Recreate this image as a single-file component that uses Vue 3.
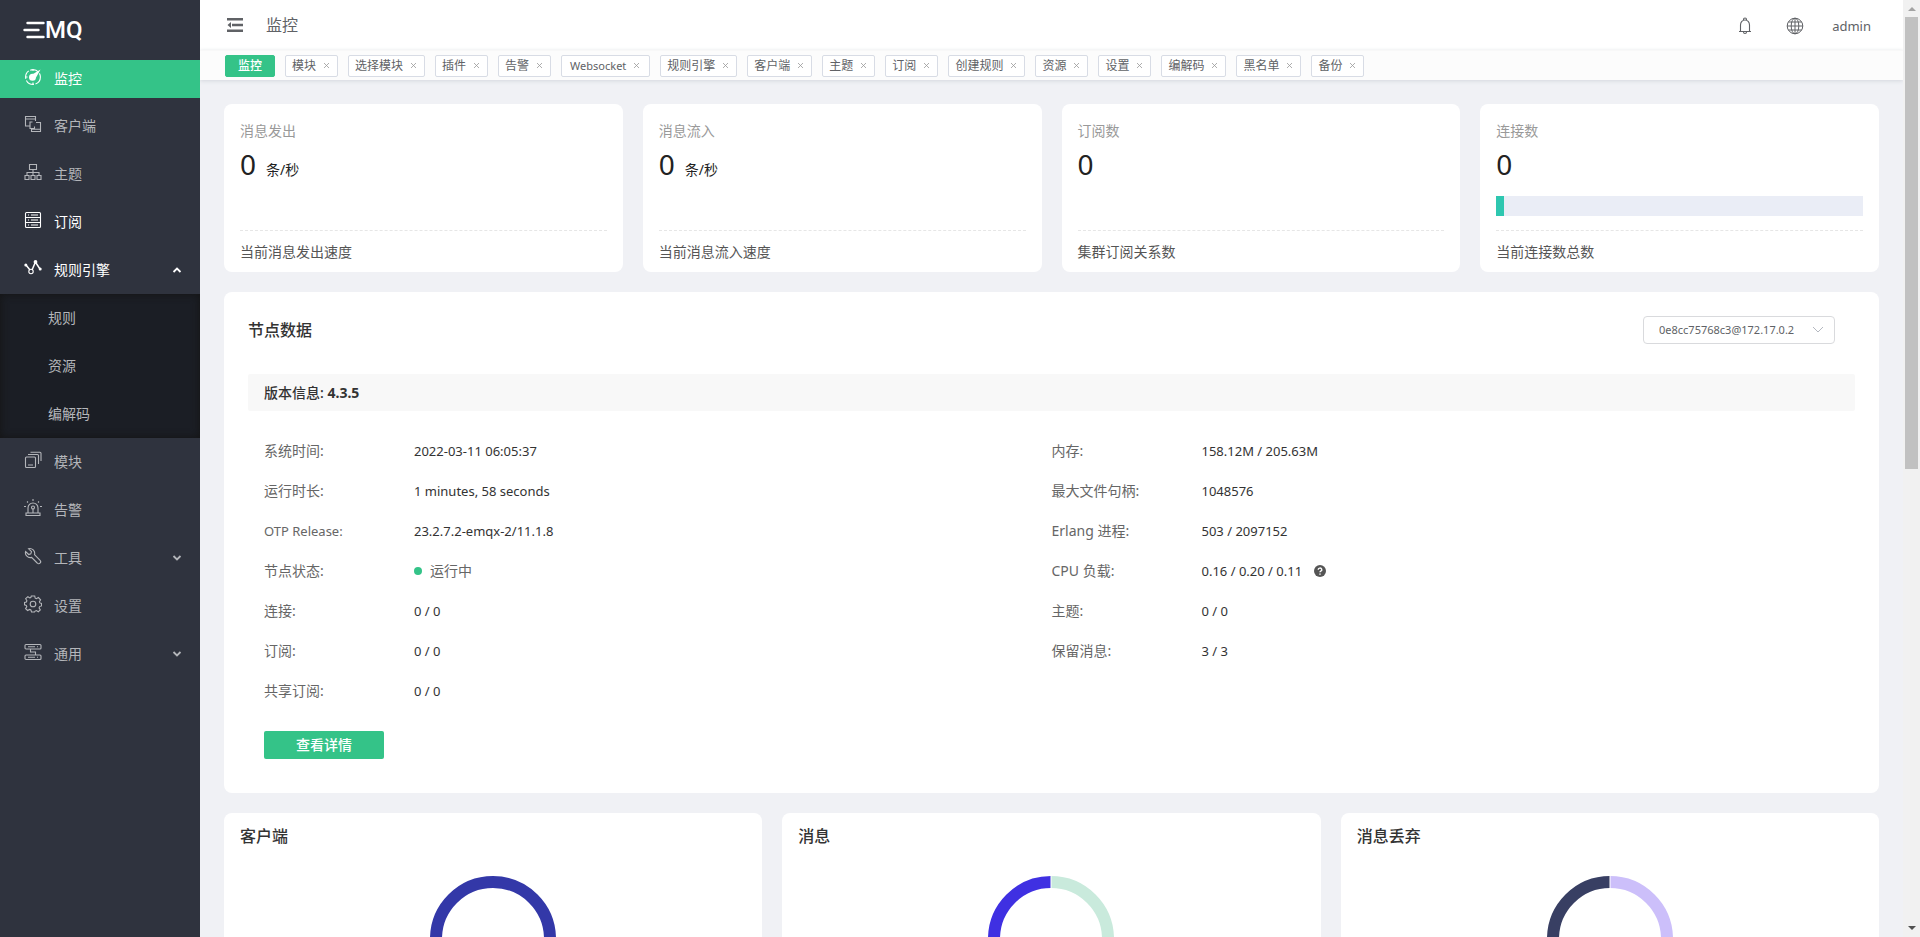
<script setup>
import { ref } from 'vue'

const icons = {
  monitor: '<circle cx="9" cy="9" r="7.4" stroke-dasharray="9 1.6"/><circle cx="8.500" cy="9.200" r="3.500" fill="currentColor" stroke="none"/><path d="M9 6 16.500 1.500 12 9.500Z" fill="currentColor" stroke="none"/><path d="M1.500 9h2M9 16.500v-2M9 1.500v1.500"/>',
  clients: '<path d="M5.500 11h-4v-9.500h10V6M1.500 4h10M8.500 7H6v6.500h4.500v-2M12 7.500h4.500v9h-9V14M7.500 14.200h9"/>',
  topics: '<path d="M5.500 1.500h7v5h-7zM9 6.500v3M3 12V9.500h12V12M9 9.500V12M1 12.500h4v4H1zM7 12.500h4v4H7zM13 12.500h4v4h-4z"/>',
  subs: '<rect x="1.500" y="1.500" width="15" height="15" rx="1"/><path d="M1.500 6.500h15M1.500 11.500h15M7 4h7M7 9h7M7 14h7M4 4h1M4 9h1M4 14h1"/>',
  rules: '<path d="M2 6l4 5M8 11l3-7M12 4l4 6" stroke-width="1.500"/><circle cx="1.800" cy="6" r="1.500" fill="currentColor" stroke="none"/><circle cx="7" cy="12.500" r="2.200"/><circle cx="11.500" cy="3" r="1.900" fill="currentColor" stroke="none"/><circle cx="16.200" cy="10" r="1.500" fill="currentColor" stroke="none"/>',
  modules: '<rect x="1.500" y="6" width="10" height="10.500" rx="1"/><path d="M4 14h5M4 3.500h9.500a1 1 0 0 1 1 1V13M6.500 1.200H16a1 1 0 0 1 1 1V10"/>',
  alarms: '<path d="M4 13.500V9a5 5 0 0 1 10 0v4.500M2 14h14v2.500H2zM9 9.500V13.500M9 0v2M3 2.500l1 1M15 2.500l-1 1M0 7.500h2M16 7.500h2"/><circle cx="9" cy="8.500" r="1.500"/>',
  tools: '<path d="M4.500 1.700 7.500 4.700 6.800 6.800 4.700 7.500 1.600 4.600C.6 8 4 11.500 7.600 10.400L13.200 16a1.900 1.900 0 0 0 2.900-2.700L10.500 7.700C11.600 4 8 .6 4.500 1.700Z"/>',
  settings: '<path d="M7.300 1h3.400l.5 2.200 1.200.5 2-1.200 2.200 2.300-1.200 1.900.5 1.200 1.600.5v2.500l-1.900.7-.5 1.300 1.200 2-2 1.800-1.900-1.100-1.300.5L10.500 17h-3l-.6-2.100-1.300-.5-2 1.100-2-1.900 1.200-2-.5-1.200-1.800-.6V7.400l1.900-.4.5-1.300-1.200-2 2.200-2 1.900 1.200 1-.4Z"/><circle cx="9" cy="9" r="2.800"/>',
  general: '<rect x="1" y="1.500" width="16" height="4.500" rx="1"/><rect x="1" y="12" width="16" height="4.500" rx="1"/><path d="M4 3.800h7M13 3.800h1M4 14.200h7M13 14.200h1M6.500 6v3h5v3"/>',
}

const menu = [
  { label: '监控', icon: 'monitor', state: 'active' },
  { label: '客户端', icon: 'clients' },
  { label: '主题', icon: 'topics' },
  { label: '订阅', icon: 'subs', state: 'bright' },
  { label: '规则引擎', icon: 'rules', state: 'bright', arrow: 'up', children: ['规则', '资源', '编解码'] },
  { label: '模块', icon: 'modules' },
  { label: '告警', icon: 'alarms' },
  { label: '工具', icon: 'tools', arrow: 'down' },
  { label: '设置', icon: 'settings' },
  { label: '通用', icon: 'general', arrow: 'down' },
]

const tabs = ['模块', '选择模块', '插件', '告警', 'Websocket', '规则引擎', '客户端', '主题', '订阅', '创建规则', '资源', '设置', '编解码', '黑名单', '备份']

const stats = [
  { title: '消息发出', value: 0, unit: '条/秒', note: '当前消息发出速度' },
  { title: '消息流入', value: 0, unit: '条/秒', note: '当前消息流入速度' },
  { title: '订阅数', value: 0, note: '集群订阅关系数' },
  { title: '连接数', value: 0, note: '当前连接数总数', percent: 2 },
]

const columns = [
  [
    ['系统时间:', '2022-03-11 06:05:37'],
    ['运行时长:', '1 minutes, 58 seconds'],
    ['OTP Release:', '23.2.7.2-emqx-2/11.1.8'],
    ['节点状态:', '运行中', 'status'],
    ['连接:', '0 / 0'],
    ['订阅:', '0 / 0'],
    ['共享订阅:', '0 / 0'],
  ],
  [
    ['内存:', '158.12M / 205.63M'],
    ['最大文件句柄:', '1048576'],
    ['Erlang 进程:', '503 / 2097152'],
    ['CPU 负载:', '0.16 / 0.20 / 0.11', 'help'],
    ['主题:', '0 / 0'],
    ['保留消息:', '3 / 3'],
  ],
]

const charts = [
  { title: '客户端', left: '#3338a8', right: '#3338a8' },
  { title: '消息', left: '#3f30e2', right: '#c9eadc', split: true },
  { title: '消息丢弃', left: '#383f63', right: '#ccbffa', split: true },
]

const isLatin = (text) => /^[\x20-\x7e]+$/.test(text)
const node = ref('0e8cc75768c3@172.17.0.2')
</script>

<template>
  <div class="layout">
    <aside class="sidebar">
      <a class="logo" href="#" aria-label="EMQ">
        <svg width="22" height="18" viewBox="0 0 22 18" fill="none" stroke="currentColor" stroke-width="2.400" stroke-linecap="round" aria-hidden="true">
          <path d="M4.500 2h16M1.500 9h14M4.500 16h16" />
        </svg>
        <span>MQ</span>
      </a>
      <nav>
        <template v-for="item in menu" :key="item.label">
          <a href="#" class="item" :class="item.state">
            <svg class="icon" width="18" height="18" viewBox="0 0 18 18" fill="none" stroke="currentColor" stroke-width="1.100" aria-hidden="true" v-html="icons[item.icon]"></svg>
            <span>{{ item.label }}</span>
            <svg v-if="item.arrow" class="arrow" width="10" height="10" viewBox="0 0 10 10" fill="none" stroke="currentColor" stroke-width="1.800" aria-hidden="true">
              <path :d="item.arrow === 'up' ? 'M1.500 7 5 3.500 8.500 7' : 'M1.500 3 5 6.500 8.500 3'" />
            </svg>
          </a>
          <div v-if="item.children" class="submenu">
            <a v-for="child in item.children" :key="child" href="#">{{ child }}</a>
          </div>
        </template>
      </nav>
    </aside>

    <main class="main">
      <header class="topbar">
        <button class="plain" type="button" aria-label="折叠菜单">
          <svg width="16" height="14" viewBox="0 0 16 14" fill="currentColor" aria-hidden="true">
            <path d="M0 0h16v2.500H0zM5 5.800h11v2.500H5zM0 11.500h16V14H0zM4 4v6L.5 7z" />
          </svg>
        </button>
        <h1>监控</h1>
        <div class="actions">
          <button class="plain" type="button" aria-label="通知">
            <svg width="14" height="18" viewBox="0 0 14 18" fill="none" stroke="currentColor" stroke-width="1.100" aria-hidden="true">
              <path d="M1 14.500h12M2.500 14.500V8a4.500 5 0 0 1 9 0v6.500M5.500 3.200V2.500a1.500 1.500 0 0 1 3 0v.7M5.500 15a1.500 1.500 0 0 0 3 0" />
            </svg>
          </button>
          <button class="plain" type="button" aria-label="语言">
            <svg width="18" height="18" viewBox="0 0 18 18" fill="none" stroke="currentColor" aria-hidden="true">
              <circle cx="9" cy="9" r="7.800" />
              <ellipse cx="9" cy="9" rx="3.800" ry="7.800" />
              <path d="M9 1v16M1 9h16M2.500 5h13M2.500 13h13" />
            </svg>
          </button>
          <a href="#" class="user">admin</a>
        </div>
      </header>

      <div class="tabs">
        <a href="#" class="tab current">监控</a>
        <a v-for="tab in tabs" :key="tab" href="#" class="tab" :class="{ latin: isLatin(tab) }">
          <span>{{ tab }}</span>
          <svg width="5" height="5" viewBox="0 0 5 5" stroke="currentColor" stroke-width="0.800" aria-hidden="true"><path d="M0 0l5 5M5 0L0 5" /></svg>
        </a>
      </div>

      <div class="content">
        <section class="stats">
          <article v-for="s in stats" :key="s.title" class="card stat">
            <h2>{{ s.title }}</h2>
            <p class="figure"><strong>{{ s.value }}</strong><span v-if="s.unit">{{ s.unit }}</span></p>
            <div class="graph">
              <div v-if="s.percent" class="bar"><div class="fill" :style="{ width: s.percent + '%' }"></div></div>
            </div>
            <p class="note">{{ s.note }}</p>
          </article>
        </section>

        <section class="card node">
          <div class="node-head">
            <h2>节点数据</h2>
            <div class="picker">
              <select v-model="node" aria-label="节点">
                <option>0e8cc75768c3@172.17.0.2</option>
              </select>
              <svg width="12" height="8" viewBox="0 0 12 8" fill="none" stroke="currentColor" aria-hidden="true"><path d="M1 1l5 5 5-5" /></svg>
            </div>
          </div>
          <div class="version">版本信息: <span>4.3.5</span></div>
          <div class="details">
            <dl v-for="(rows, i) in columns" :key="i">
              <div v-for="[label, value, kind] in rows" :key="label" class="row">
                <dt :class="{ latin: isLatin(label) }">{{ label }}</dt>
                <dd :class="{ latin: isLatin(value), status: kind === 'status' }">
                  <i v-if="kind === 'status'" class="dot"></i>{{ value }}
                  <svg v-if="kind === 'help'" width="12" height="12" viewBox="0 0 12 12" aria-hidden="true">
                    <circle cx="6" cy="6" r="6" fill="#555" />
                    <path d="M4.200 4.700a1.800 1.600 0 1 1 2.600 1.400Q6 6.500 6 7.300M6 8.400v1.300" fill="none" stroke="#fff" stroke-width="1.400" />
                  </svg>
                </dd>
              </div>
            </dl>
          </div>
          <button class="primary" type="button">查看详情</button>
        </section>

        <section class="charts">
          <article v-for="c in charts" :key="c.title" class="card chart">
            <h2>{{ c.title }}</h2>
            <svg width="126" height="126" viewBox="0 0 126 126" fill="none" stroke-width="12" aria-hidden="true">
              <path d="M63 6a57 57 0 0 0 0 114" :stroke="c.left" />
              <path d="M63 6a57 57 0 0 1 0 114" :stroke="c.right" />
              <path v-if="c.split" d="M63 0v126" stroke="#fff" stroke-width="1" />
            </svg>
          </article>
        </section>
      </div>
    </main>

    <div class="scrollbar" aria-hidden="true">
      <svg width="8" height="4" viewBox="0 0 8 4" fill="#a3a3a3"><path d="M4 0l4 4H0z" /></svg>
      <div class="track"><div class="thumb"></div></div>
      <svg width="8" height="4" viewBox="0 0 8 4" fill="#505050"><path d="M4 4l4-4H0z" /></svg>
    </div>
  </div>
</template>

<style>
body {
  background: #f0f1f5;
}
</style>

<style scoped>
.layout {
  display: grid;
  grid-template-columns: 200px minmax(0, 1fr) 17px;
  height: 100vh;
  overflow: hidden;
  font: 14px/20px "Noto Sans", "Noto Sans CJK SC", sans-serif;
  color: #333;
}
.layout * {
  box-sizing: border-box;
}
a {
  color: inherit;
  text-decoration: none;
}
h1, h2, p, dl, dd {
  margin: 0;
}
button {
  font: inherit;
  cursor: pointer;
}
svg {
  flex: none;
}

.sidebar {
  background: #2f333e;
  color: #b4b6ba;
  overflow: hidden;
}
.logo {
  display: flex;
  align-items: center;
  height: 60px;
  padding-left: 23px;
  color: #fff;
  font: 500 24px/60px Roboto, sans-serif;
}
.item {
  display: flex;
  align-items: center;
  height: 48px;
  padding: 0 18px 0 24px;
}
.item .icon {
  margin: 0 12px 4px 0;
}
.item .arrow {
  margin-left: auto;
}
.item.active {
  height: 38px;
  margin-bottom: 4px;
  background: #34c388;
  color: #fff;
}
.item.bright {
  color: #fff;
}
.submenu {
  background: #1b1e25;
  box-shadow: inset 0 0 8px #141414;
}
.submenu a {
  display: block;
  padding-left: 48px;
  line-height: 48px;
}

.main {
  overflow-y: auto;
  scrollbar-width: none;
}
.topbar {
  display: flex;
  align-items: center;
  height: 50px;
  padding: 0 32px 0 27px;
  background: #fff;
  color: #606266;
}
.plain {
  display: flex;
  padding: 0;
  border: 0;
  background: none;
  color: inherit;
}
.topbar h1 {
  margin-left: 23px;
  font-size: 16px;
  font-weight: 400;
}
.actions {
  display: flex;
  align-items: center;
  gap: 34px;
  margin-left: auto;
  padding-top: 2px;
}
.user {
  margin-left: -6px;
  font-size: 13px;
}
.tabs {
  display: flex;
  align-items: center;
  gap: 10px;
  height: 30px;
  padding: 0 25px;
  background: #fcfcfc;
  border-top: 1px solid #f8f8f8;
  box-shadow: 0 1px 4px #d4d7dd;
  font-size: 12px;
  white-space: nowrap;
}
.tab {
  display: flex;
  align-items: center;
  gap: 8px;
  height: 22px;
  padding: 0 8px 0 6px;
  border: 1px solid #d8dce5;
  border-radius: 2px;
  background: #fff;
  color: #606266;
}
.tab svg {
  color: #999;
}
.tab.latin {
  padding: 0 10px 0 8px;
  font-size: 11px;
}
.tab.current {
  padding: 0 12px;
  border-color: #34c388;
  background: #34c388;
  color: #fff;
  font-weight: 500;
}

.content {
  display: grid;
  gap: 20px;
  padding: 24px;
}
.card {
  background: #fff;
  border-radius: 8px;
}
.stats {
  display: grid;
  grid-template-columns: repeat(4, minmax(0, 1fr));
  gap: 20px;
}
.stat {
  padding: 17px 16px 10px;
}
.stat h2 {
  color: #999;
  font-size: 14px;
  font-weight: 400;
}
.figure {
  display: flex;
  align-items: baseline;
  gap: 10px;
  height: 47px;
  color: #222;
  line-height: 46px;
}
.figure strong {
  font-size: 28px;
  font-weight: 400;
}
.graph {
  height: 43px;
  padding-top: 8px;
  border-bottom: 1px dashed #e6e6e6;
}
.bar {
  height: 20px;
  background: #eaedf6;
}
.fill {
  height: 100%;
  background: #2ec7b0;
}
.note {
  padding-top: 11px;
  color: #555;
}

.node {
  padding: 24px 24px 34px;
}
.node-head {
  display: flex;
  align-items: center;
  justify-content: space-between;
  height: 28px;
  padding-right: 20px;
}
.node h2, .chart h2 {
  font-size: 16px;
  font-weight: 500;
}
.picker {
  position: relative;
  width: 192px;
}
.picker select {
  width: 100%;
  height: 28px;
  padding: 0 30px 0 15px;
  border: 1px solid #d9dadd;
  border-radius: 4px;
  background: #fff;
  color: #606266;
  font: 11px/20px "Noto Sans", sans-serif;
  appearance: none;
}
.picker svg {
  position: absolute;
  right: 11px;
  top: 10px;
  color: #b4b8c0;
  pointer-events: none;
}
.version {
  margin: 30px 0 20px;
  padding: 0 16px;
  border-radius: 2px;
  background: #f8f8f8;
  font-weight: 500;
  line-height: 37px;
}
.version span {
  font-weight: 700;
}
.details {
  display: grid;
  grid-template-columns: 1fr 1fr;
  padding: 0 16px;
}
.row {
  display: flex;
  line-height: 40px;
}
dt {
  width: 150px;
  color: #666;
}
dd {
  display: flex;
  align-items: center;
}
dt.latin, dd.latin {
  font-size: 13px;
}
dd svg {
  margin-left: 12px;
}
.status {
  color: #666;
}
.dot {
  width: 8px;
  height: 8px;
  margin-right: 8px;
  border-radius: 50%;
  background: #34c388;
}
.primary {
  display: block;
  width: 120px;
  height: 28px;
  margin: 20px 16px 0;
  padding: 0;
  border: 0;
  border-radius: 2px;
  background: #34c388;
  color: #fff;
  font-weight: 500;
}

.charts {
  display: grid;
  grid-template-columns: repeat(3, minmax(0, 1fr));
  gap: 20px;
}
.chart {
  padding: 13px 16px 60px;
}
.chart svg {
  display: block;
  margin: 30px auto 0;
}

.scrollbar {
  display: flex;
  flex-direction: column;
  align-items: center;
  padding: 7px 0;
  background: #f1f1f1;
}
.track {
  flex: 1;
  width: 13px;
  margin: 6px 0;
}
.thumb {
  height: 50%;
  background: #c1c1c1;
}
</style>
